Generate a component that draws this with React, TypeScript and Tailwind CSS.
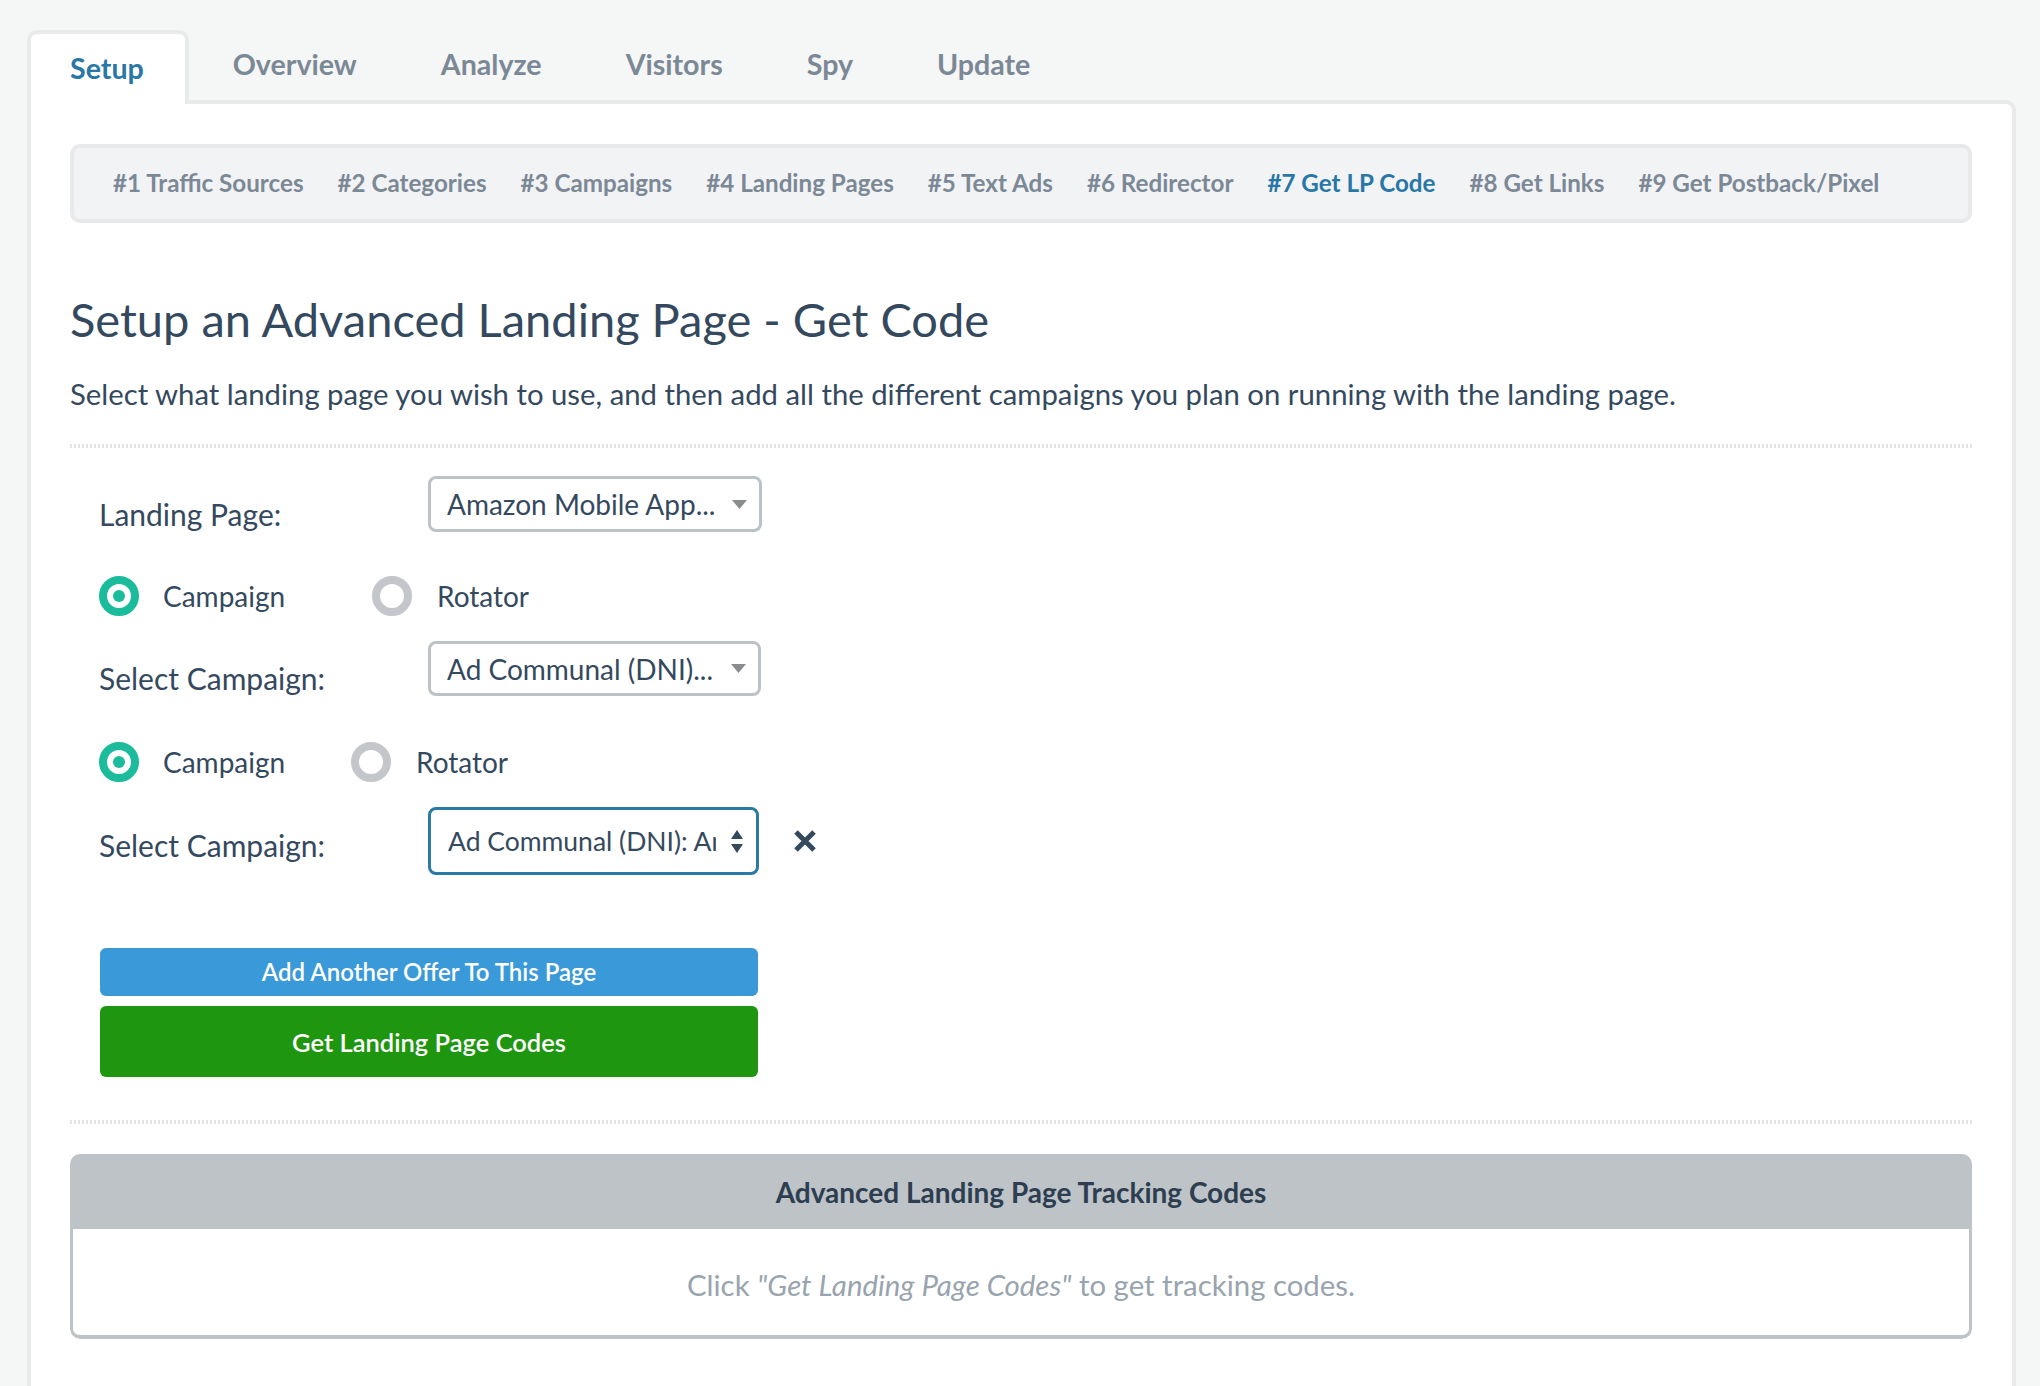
import React from "react";

function Radio({ on }: { on: boolean }) {
  return (
    <div
      className={
        on
          ? "flex h-[40px] w-[40px] shrink-0 items-center justify-center rounded-full border-[8px] border-[#1abc9c] bg-white"
          : "flex h-[40px] w-[40px] shrink-0 items-center justify-center rounded-full border-[8px] border-[#c3c7cb] bg-white"
      }
    >
      {on && <div className="h-[12px] w-[12px] rounded-full bg-[#1abc9c]" />}
    </div>
  );
}

function Caret() {
  return (
    <svg width="15" height="9" viewBox="0 0 15 9" className="shrink-0">
      <path d="M0 0H15L7.5 9Z" fill="#8a8d90" />
    </svg>
  );
}

function UpDown() {
  return (
    <svg width="12" height="23" viewBox="0 0 12 23" className="shrink-0">
      <path d="M6 0L12 9H0Z" fill="#34495e" />
      <path d="M0 14H12L6 23Z" fill="#34495e" />
    </svg>
  );
}

function Dotted() {
  return (
    <div className="h-[4px] bg-[image:repeating-linear-gradient(90deg,#e2e4e6_0px,#e2e4e6_2px,transparent_2px,transparent_4px)]" />
  );
}

export default function App() {
  const tabs = ["Overview", "Analyze", "Visitors", "Spy", "Update"];
  const steps = [
    "#1 Traffic Sources",
    "#2 Categories",
    "#3 Campaigns",
    "#4 Landing Pages",
    "#5 Text Ads",
    "#6 Redirector",
    "#7 Get LP Code",
    "#8 Get Links",
    "#9 Get Postback/Pixel",
  ];
  return (
    <div className="min-h-screen bg-[#f5f6f6] pl-[27px] pr-[24px] pt-[30px] font-[Lato,sans-serif] text-[#34495e]">
      {/* Tabs */}
      <div className="flex h-[70px] items-start">
        <div className="relative z-10 h-[74px] rounded-t-[10px] border-4 border-b-0 border-[#e9eaea] bg-white pl-[39px] pr-[41px] pt-[18px] text-[28.6px] font-bold leading-[32px] text-[#2877a6]">
          Setup
        </div>
        {tabs.map((t) => (
          <div
            key={t}
            className="border-4 border-b-0 border-transparent pl-[40px] pr-[36px] pt-[14px] text-[28.6px] font-bold leading-[32px] text-[#7b8896]"
          >
            {t}
          </div>
        ))}
      </div>

      {/* Panel */}
      <div className="rounded-tr-[10px] border-4 border-b-0 border-[#e9eaea] bg-white pb-[60px] pl-[39px] pr-[40px] pt-[40px]">
        <div className="flex h-[79px] items-center gap-[34px] rounded-[10px] border-4 border-[#e8e9ea] bg-[#f2f3f5] pl-[39px] text-[24.2px] font-bold text-[#7b8896]">
          {steps.map((s) => (
            <span key={s} className={s === "#7 Get LP Code" ? "text-[#2877a6]" : ""}>
              {s}
            </span>
          ))}
        </div>

        <h1 className="mt-[68px] text-[47px] font-normal leading-[56px] text-[#34495e]">
          Setup an Advanced Landing Page - Get Code
        </h1>
        <p className="mt-[27px] text-[29.3px] leading-[40px] text-[#34495e]">
          Select what landing page you wish to use, and then add all the different campaigns you plan on running with the landing page.
        </p>
        <div className="mt-[30px]">
          <Dotted />
        </div>

        <div className="pl-[29px] text-[28px] leading-[40px]">
          {/* Landing page */}
          <div className="mt-[28px] flex h-[56px] items-start">
            <div className="w-[329px] pt-[18px] text-[30px]">Landing Page:</div>
            <div className="flex h-[56px] w-[334px] items-center justify-between rounded-[8px] border-[3px] border-[#bdc2c6] pl-[16px] pr-[12px]">
              <span className="whitespace-nowrap">Amazon Mobile App...</span>
              <Caret />
            </div>
          </div>

          {/* Radio row 1 */}
          <div className="mt-[44px] flex h-[40px] items-center">
            <div className="flex w-[273px] items-center">
              <Radio on />
              <span className="ml-[24px]">Campaign</span>
            </div>
            <div className="flex items-center">
              <Radio on={false} />
              <span className="ml-[25px]">Rotator</span>
            </div>
          </div>

          {/* Select campaign 1 */}
          <div className="mt-[25px] flex h-[55px] items-start">
            <div className="w-[329px] pt-[17px] text-[30px]">Select Campaign:</div>
            <div className="flex h-[55px] w-[333px] items-center justify-between rounded-[8px] border-[3px] border-[#bdc2c6] pl-[16px] pr-[12px]">
              <span className="whitespace-nowrap">Ad Communal (DNI)...</span>
              <Caret />
            </div>
          </div>

          {/* Radio row 2 */}
          <div className="mt-[46px] flex h-[40px] items-center">
            <div className="flex w-[252px] items-center">
              <Radio on />
              <span className="ml-[24px]">Campaign</span>
            </div>
            <div className="flex items-center">
              <Radio on={false} />
              <span className="ml-[25px]">Rotator</span>
            </div>
          </div>

          {/* Select campaign 2 */}
          <div className="mt-[25px] flex h-[68px] items-start">
            <div className="w-[329px] pt-[18px] text-[30px]">Select Campaign:</div>
            <div className="flex h-[68px] w-[331px] items-center justify-between rounded-[8px] border-[3px] border-[#2a7aa6] pl-[17px] pr-[13px]">
              <span className="w-[268px] overflow-hidden whitespace-nowrap text-[26.5px]">Ad Communal (DNI): Amazon Mobile App</span>
              <UpDown />
            </div>
            <div className="ml-[34px] flex h-[68px] items-center">
              <svg width="24" height="22" viewBox="0 0 24 22">
                <path d="M3 2L21 20M21 2L3 20" stroke="#34495e" strokeWidth="5" />
              </svg>
            </div>
          </div>

          {/* Buttons */}
          <div className="mt-[73px] w-[659px] pl-[1px]">
            <div className="flex h-[48px] items-center justify-center rounded-[6px] bg-[#3a99d8] text-[24px] font-semibold text-white">
              Add Another Offer To This Page
            </div>
            <div className="mt-[10px] flex h-[71px] items-center justify-center rounded-[6px] bg-[#1f960f] text-[25.5px] font-semibold text-white">
              Get Landing Page Codes
            </div>
          </div>
        </div>

        <div className="mt-[43px]">
          <Dotted />
        </div>

        {/* Tracking codes box */}
        <div className="mt-[30px] overflow-hidden rounded-[10px]">
          <div className="flex h-[75px] items-center justify-center bg-[#bdc3c7] text-[28px] font-bold text-[#2c3e50]">
            Advanced Landing Page Tracking Codes
          </div>
          <div className="h-[110px] rounded-b-[10px] border-x-[3px] border-b-4 border-[#bdc3c7] bg-white pt-[36px] text-center text-[29.4px] leading-[40px] text-[#98a4ae]">
            Click <span className="italic">"Get Landing Page Codes"</span> to get tracking codes.
          </div>
        </div>
      </div>
    </div>
  );
}
